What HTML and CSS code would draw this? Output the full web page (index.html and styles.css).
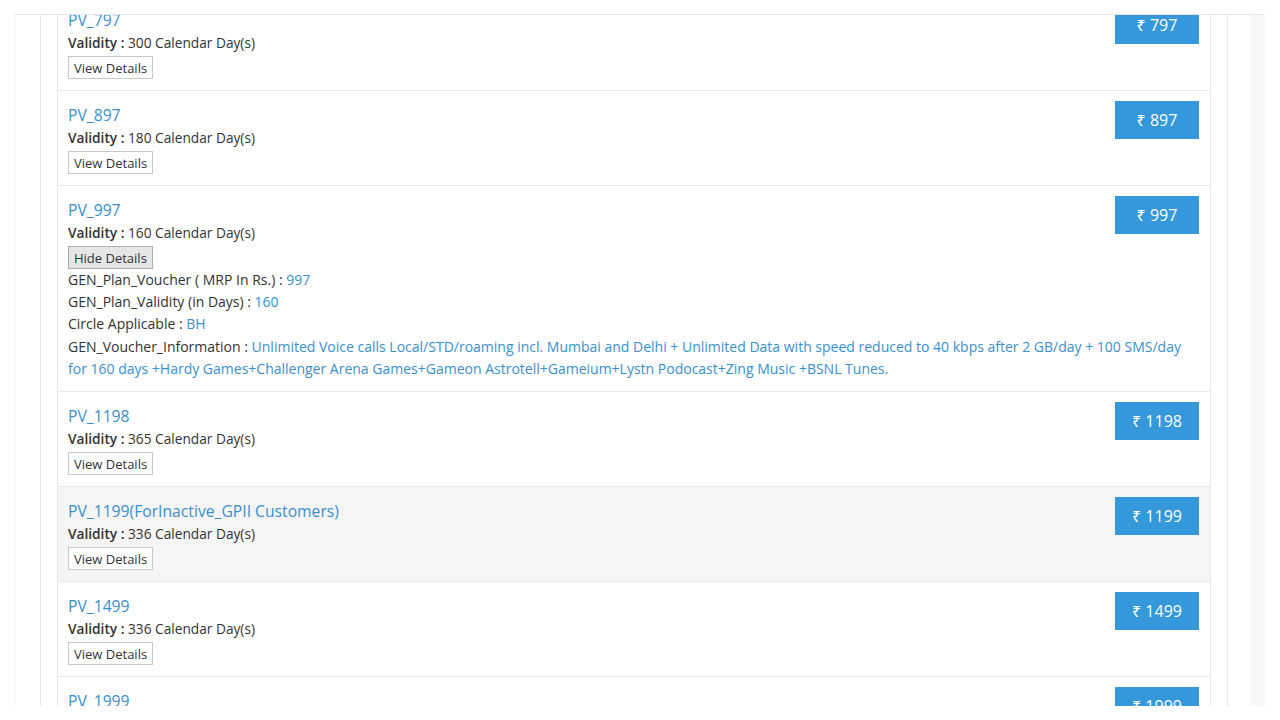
FILE: index.html
```html
<!DOCTYPE html>
<html>
<head>
  <title>Plan Vouchers</title>
  <link rel="stylesheet" href="styles.css">
</head>
<body>
  <div class="viewport">
    <div class="page">
      <div class="panel">
        <ul class="plans">
          <li class="plan">
            <button class="price-btn">&#8377; 797</button>
            <a class="plan-name" href="#">PV_797</a>
            <div class="validity"><b>Validity :</b> 300 Calendar Day(s)</div>
            <button class="details-btn">View Details</button>
          </li>
          <li class="plan">
            <button class="price-btn">&#8377; 897</button>
            <a class="plan-name" href="#">PV_897</a>
            <div class="validity"><b>Validity :</b> 180 Calendar Day(s)</div>
            <button class="details-btn">View Details</button>
          </li>
          <li class="plan">
            <button class="price-btn">&#8377; 997</button>
            <a class="plan-name" href="#">PV_997</a>
            <div class="validity"><b>Validity :</b> 160 Calendar Day(s)</div>
            <button class="details-btn active">Hide Details</button>
            <div class="details">
              <div>GEN_Plan_Voucher ( MRP In Rs.) : <span class="val">997</span></div>
              <div>GEN_Plan_Validity (in Days) : <span class="val">160</span></div>
              <div>Circle Applicable : <span class="val">BH</span></div>
              <div>GEN_Voucher_Information : <span class="val">Unlimited Voice calls Local/STD/roaming incl. Mumbai and Delhi + Unlimited Data with speed reduced to 40 kbps after 2 GB/day + 100 SMS/day for 160 days +Hardy Games+Challenger Arena Games+Gameon Astrotell+Gameium+Lystn Podocast+Zing Music +BSNL Tunes.</span></div>
            </div>
          </li>
          <li class="plan">
            <button class="price-btn">&#8377; 1198</button>
            <a class="plan-name" href="#">PV_1198</a>
            <div class="validity"><b>Validity :</b> 365 Calendar Day(s)</div>
            <button class="details-btn">View Details</button>
          </li>
          <li class="plan hover">
            <button class="price-btn">&#8377; 1199</button>
            <a class="plan-name" href="#">PV_1199(ForInactive_GPII Customers)</a>
            <div class="validity"><b>Validity :</b> 336 Calendar Day(s)</div>
            <button class="details-btn">View Details</button>
          </li>
          <li class="plan">
            <button class="price-btn">&#8377; 1499</button>
            <a class="plan-name" href="#">PV_1499</a>
            <div class="validity"><b>Validity :</b> 336 Calendar Day(s)</div>
            <button class="details-btn">View Details</button>
          </li>
          <li class="plan">
            <button class="price-btn">&#8377; 1999</button>
            <a class="plan-name" href="#">PV_1999</a>
            <div class="validity"><b>Validity :</b> 425 Calendar Day(s)</div>
            <button class="details-btn">View Details</button>
          </li>
        </ul>
      </div>
    </div>
    <div class="scrollbar"></div>
  </div>
</body>
</html>
```

FILE: styles.css
```css
body {
  margin: 0;
  background: #fff;
  font-family: "Open Sans", "Noto Sans", sans-serif;
  font-size: 14px;
  color: #333;
}
.viewport {
  margin: 14px 0 0 14px;
  width: 1251px;
  height: 692px;
  box-sizing: border-box;
  border-top: 1px solid #e6e6e6;
  border-left: 1px solid #f3f3f3;
  overflow: hidden;
  display: flex;
}
.page {
  flex: 1;
  display: flex;
  flex-direction: column;
  padding-left: 25px;
  padding-right: 22px;
}
.panel {
  flex: 1;
  border-left: 1px solid #e6e6e6;
  border-right: 1px solid #e6e6e6;
  padding: 0 16px;
}
.scrollbar {
  width: 15px;
  background: #f8f8f8;
}
.plans {
  list-style: none;
  margin: -20px 0 0 0;
  padding: 0;
  border-left: 1px solid #e8e8e8;
  border-right: 1px solid #e8e8e8;
}
.plan {
  padding: 12px 11px 11px 10px;
  border-top: 1px solid #e8e8e8;
  line-height: 22px;
}
.plan.hover {
  background: #f5f5f5;
}
.plan-name {
  display: block;
  font-size: 15.7px;
  line-height: 24px;
  color: #3a8fcc;
  text-decoration: none;
}
.validity {
  font-size: 13.7px;
}
.validity b {
  font-weight: 600;
}
.details-btn {
  display: block;
  margin-top: 2px;
  height: 23px;
  padding: 0 5px;
  font-family: inherit;
  font-size: 13px;
  color: #333;
  background: #fff;
  border: 1px solid #c8c8c8;
  border-radius: 0;
}
.details-btn.active {
  background: #e6e6e6;
  border-color: #adadad;
}
.details {
  line-height: 22.2px;
}
.details .val {
  color: #3a8fcc;
}
.price-btn {
  float: right;
  width: 84px;
  height: 38px;
  margin-top: -2px;
  margin-left: 20px;
  background: #3498db;
  color: #fff;
  border: none;
  border-radius: 0;
  font-family: inherit;
  font-size: 16px;
}
```
